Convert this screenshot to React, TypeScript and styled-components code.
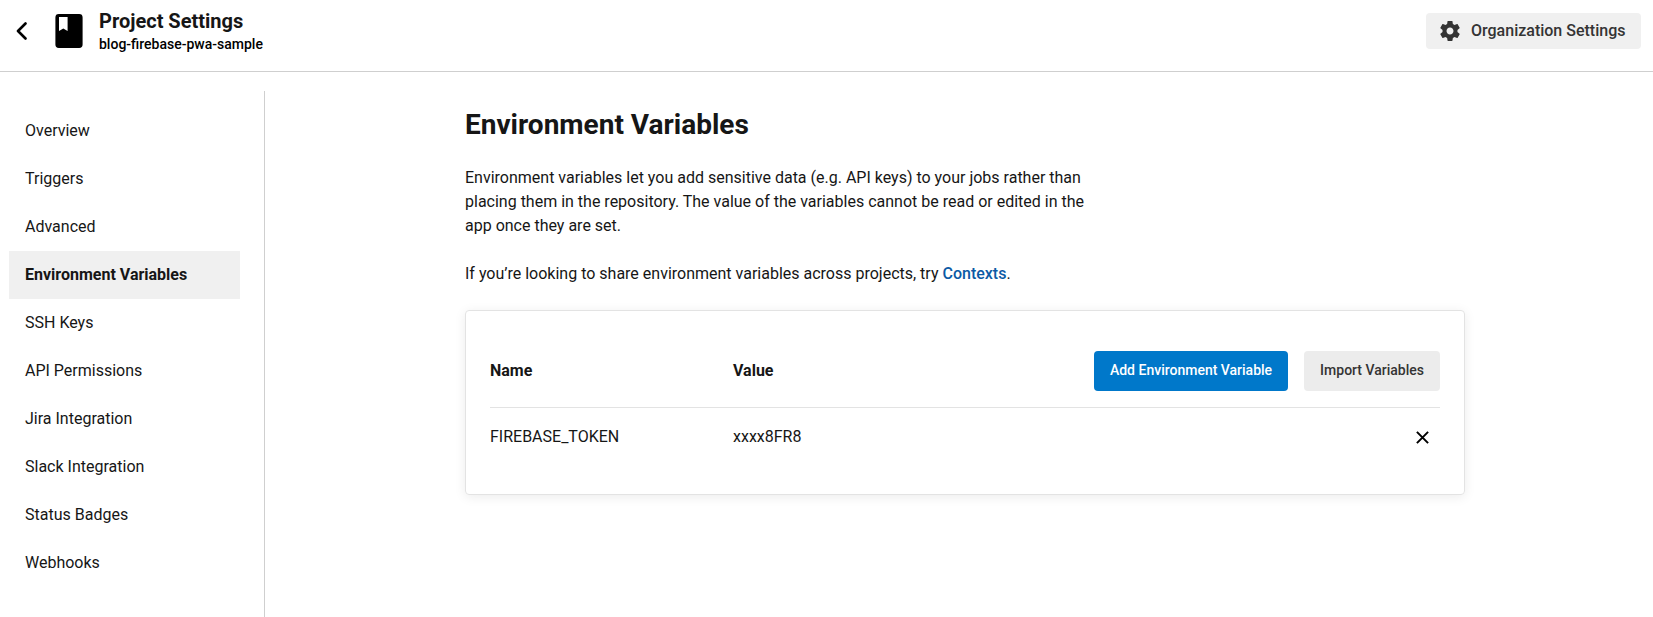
import React from "react";
import styled, { createGlobalStyle } from "styled-components";

const GlobalStyle = createGlobalStyle`
  *, *::before, *::after { box-sizing: border-box; }
  html, body { margin: 0; height: 100%; }
  body {
    background: #fff;
    color: #161616;
    font-family: Roboto, "Liberation Sans", sans-serif;
    font-size: 16px;
    line-height: 24px;
    overflow: hidden;
  }
  #root { height: 100%; }
  button { font-family: inherit; border: 0; cursor: pointer; }
`;

const Page = styled.div`
  display: flex;
  flex-direction: column;
  height: 100vh;
`;

const Header = styled.header`
  display: flex;
  align-items: flex-start;
  flex: none;
  height: 72px;
  padding-left: 16px;
  padding-right: 12px;
  border-bottom: 1px solid #cfcfcf;
`;

const BackButton = styled.button`
  display: flex;
  margin-top: 22px;
  padding: 0;
  background: none;
`;

const ProjectIcon = styled.svg`
  flex: none;
  margin: 14px 0 0 28px;
`;

const Titles = styled.div`
  flex: 1;
  margin: 9px 0 0 16px;
`;

const PageTitle = styled.div`
  font-size: 20px;
  font-weight: 700;
  line-height: 24px;
`;

const ProjectName = styled.div`
  color: #000;
  font-size: 14px;
  font-weight: 500;
  line-height: 22px;
`;

const OrgButton = styled.button`
  display: flex;
  align-items: center;
  gap: 11px;
  width: 215px;
  height: 36px;
  margin-top: 13px;
  padding: 0 0 0 14px;
  border-radius: 4px;
  background: #f0f0f0;
  color: #343434;
  font-size: 16px;
  font-weight: 500;
  line-height: 24px;
`;

const Body = styled.div`
  display: flex;
  flex: 1;
  min-height: 0;
`;

const Sidebar = styled.nav`
  flex: none;
  width: 265px;
  margin-top: 19px;
  padding: 16px 24px 0 9px;
  border-right: 1px solid #cfcfcf;
`;

const NavItem = styled.a<{ $active?: boolean }>`
  display: block;
  height: 48px;
  padding: 12px 16px;
  background: ${(p) => (p.$active ? "#f0f0f0" : "transparent")};
  font-weight: ${(p) => (p.$active ? 700 : 400)};
  color: #161616;
`;

const Main = styled.main`
  width: 1000px;
  margin-left: 200px;
  padding-top: 35px;
`;

const Heading = styled.h1`
  margin: 0 0 23px;
  font-size: 28px;
  font-weight: 700;
  line-height: 36px;
`;

const Paragraph = styled.p`
  width: 640px;
  margin: 0 0 24px;
`;

const Link = styled.a`
  color: #0b5aa5;
  font-weight: 500;
`;

const Card = styled.section`
  height: 185px;
  padding: 40px 24px 0;
  border: 1px solid #e3e3e3;
  border-radius: 4px;
  box-shadow: 0 2px 12px rgba(0, 0, 0, 0.08);
`;

const Row = styled.div<{ $head?: boolean }>`
  display: grid;
  grid-template-columns: 243px 1fr auto;
  align-items: center;
  height: 57px;
  ${(p) =>
    p.$head &&
    `padding-bottom: 16px;
     border-bottom: 1px solid #e3e3e3;
     font-weight: 700;`}
`;

const Actions = styled.div`
  display: flex;
  gap: 16px;
`;

const Button = styled.button<{ $primary?: boolean }>`
  height: 40px;
  padding: 0 16px 2px;
  border-radius: 4px;
  background: ${(p) => (p.$primary ? "#0078ca" : "#ececec")};
  color: ${(p) => (p.$primary ? "#fff" : "#343434")};
  font-size: 14px;
  font-weight: 500;
  line-height: 20px;
`;

const DeleteButton = styled.button`
  display: flex;
  margin-right: 11px;
  padding: 1px 0 0;
  background: none;
`;

const navItems = [
  "Overview",
  "Triggers",
  "Advanced",
  "Environment Variables",
  "SSH Keys",
  "API Permissions",
  "Jira Integration",
  "Slack Integration",
  "Status Badges",
  "Webhooks",
];

const variables = [{ name: "FIREBASE_TOKEN", value: "xxxx8FR8" }];

export default function App() {
  return (
    <Page>
      <GlobalStyle />
      <Header>
        <BackButton aria-label="Back">
          <svg width="11" height="18" viewBox="0 0 11 18" fill="none">
            <path d="M9.500 1.500L2 9l7.500 7.500" stroke="#000" strokeWidth="2.6" strokeLinecap="round" strokeLinejoin="round" />
          </svg>
        </BackButton>
        <ProjectIcon width="28" height="34" viewBox="0 0 28 34">
          <path
            fillRule="evenodd"
            d="M3.800 0h20.400A3.400 3.400 0 0 1 27.600 3.400v27.200a3.400 3.400 0 0 1-3.400 3.400h-20.400A3.400 3.400 0 0 1 .4 30.600v-27.200A3.400 3.400 0 0 1 3.800 0zM4 3v14l4.300-2.600 4.300 2.600V3z"
          />
        </ProjectIcon>
        <Titles>
          <PageTitle>Project Settings</PageTitle>
          <ProjectName>blog-firebase-pwa-sample</ProjectName>
        </Titles>
        <OrgButton>
          <svg width="20" height="20" viewBox="2 2 20 20" fill="#343434">
            <path d="M19.430 12.980c.04-.32.07-.64.07-.98s-.03-.66-.07-.98l2.110-1.650c.19-.15.24-.42.12-.64l-2-3.460c-.12-.22-.39-.3-.61-.22l-2.490 1c-.52-.4-1.080-.73-1.690-.98l-.38-2.650C14.460 2.180 14.250 2 14 2h-4c-.25 0-.46.18-.49.42l-.38 2.650c-.61.25-1.170.59-1.690.98l-2.490-1c-.23-.09-.49 0-.61.22l-2 3.460c-.13.22-.07.49.12.64l2.110 1.650c-.04.32-.07.65-.07.98s.03.66.07.98l-2.110 1.650c-.19.15-.24.42-.12.64l2 3.460c.12.22.39.3.61.22l2.490-1c.52.4 1.080.73 1.690.98l.38 2.650c.03.24.24.42.49.42h4c.25 0 .46-.18.49-.42l.38-2.650c.61-.25 1.170-.59 1.690-.98l2.490 1c.23.09.49 0 .61-.22l2-3.460c.12-.22.07-.49-.12-.64l-2.110-1.650zM12 15.500c-1.930 0-3.500-1.570-3.500-3.500s1.570-3.500 3.500-3.500 3.500 1.570 3.500 3.500-1.570 3.500-3.500 3.500z" />
          </svg>
          Organization Settings
        </OrgButton>
      </Header>
      <Body>
        <Sidebar>
          {navItems.map((item) => (
            <NavItem key={item} $active={item === "Environment Variables"}>
              {item}
            </NavItem>
          ))}
        </Sidebar>
        <Main>
          <Heading>Environment Variables</Heading>
          <Paragraph>
            Environment variables let you add sensitive data (e.g. API keys) to your jobs rather than placing them in
            the repository. The value of the variables cannot be read or edited in the app once they are set.
          </Paragraph>
          <Paragraph>
            If you’re looking to share environment variables across projects, try <Link>Contexts</Link>.
          </Paragraph>
          <Card>
            <Row $head>
              <span>Name</span>
              <span>Value</span>
              <Actions>
                <Button $primary>Add Environment Variable</Button>
                <Button>Import Variables</Button>
              </Actions>
            </Row>
            {variables.map((v) => (
              <Row key={v.name}>
                <span>{v.name}</span>
                <span>{v.value}</span>
                <DeleteButton aria-label="Delete">
                  <svg width="13" height="13" viewBox="0 0 13 13">
                    <path d="M.9.9l11.200 11.200M12.100.9L.9 12.100" stroke="#000" strokeWidth="2" />
                  </svg>
                </DeleteButton>
              </Row>
            ))}
          </Card>
        </Main>
      </Body>
    </Page>
  );
}
